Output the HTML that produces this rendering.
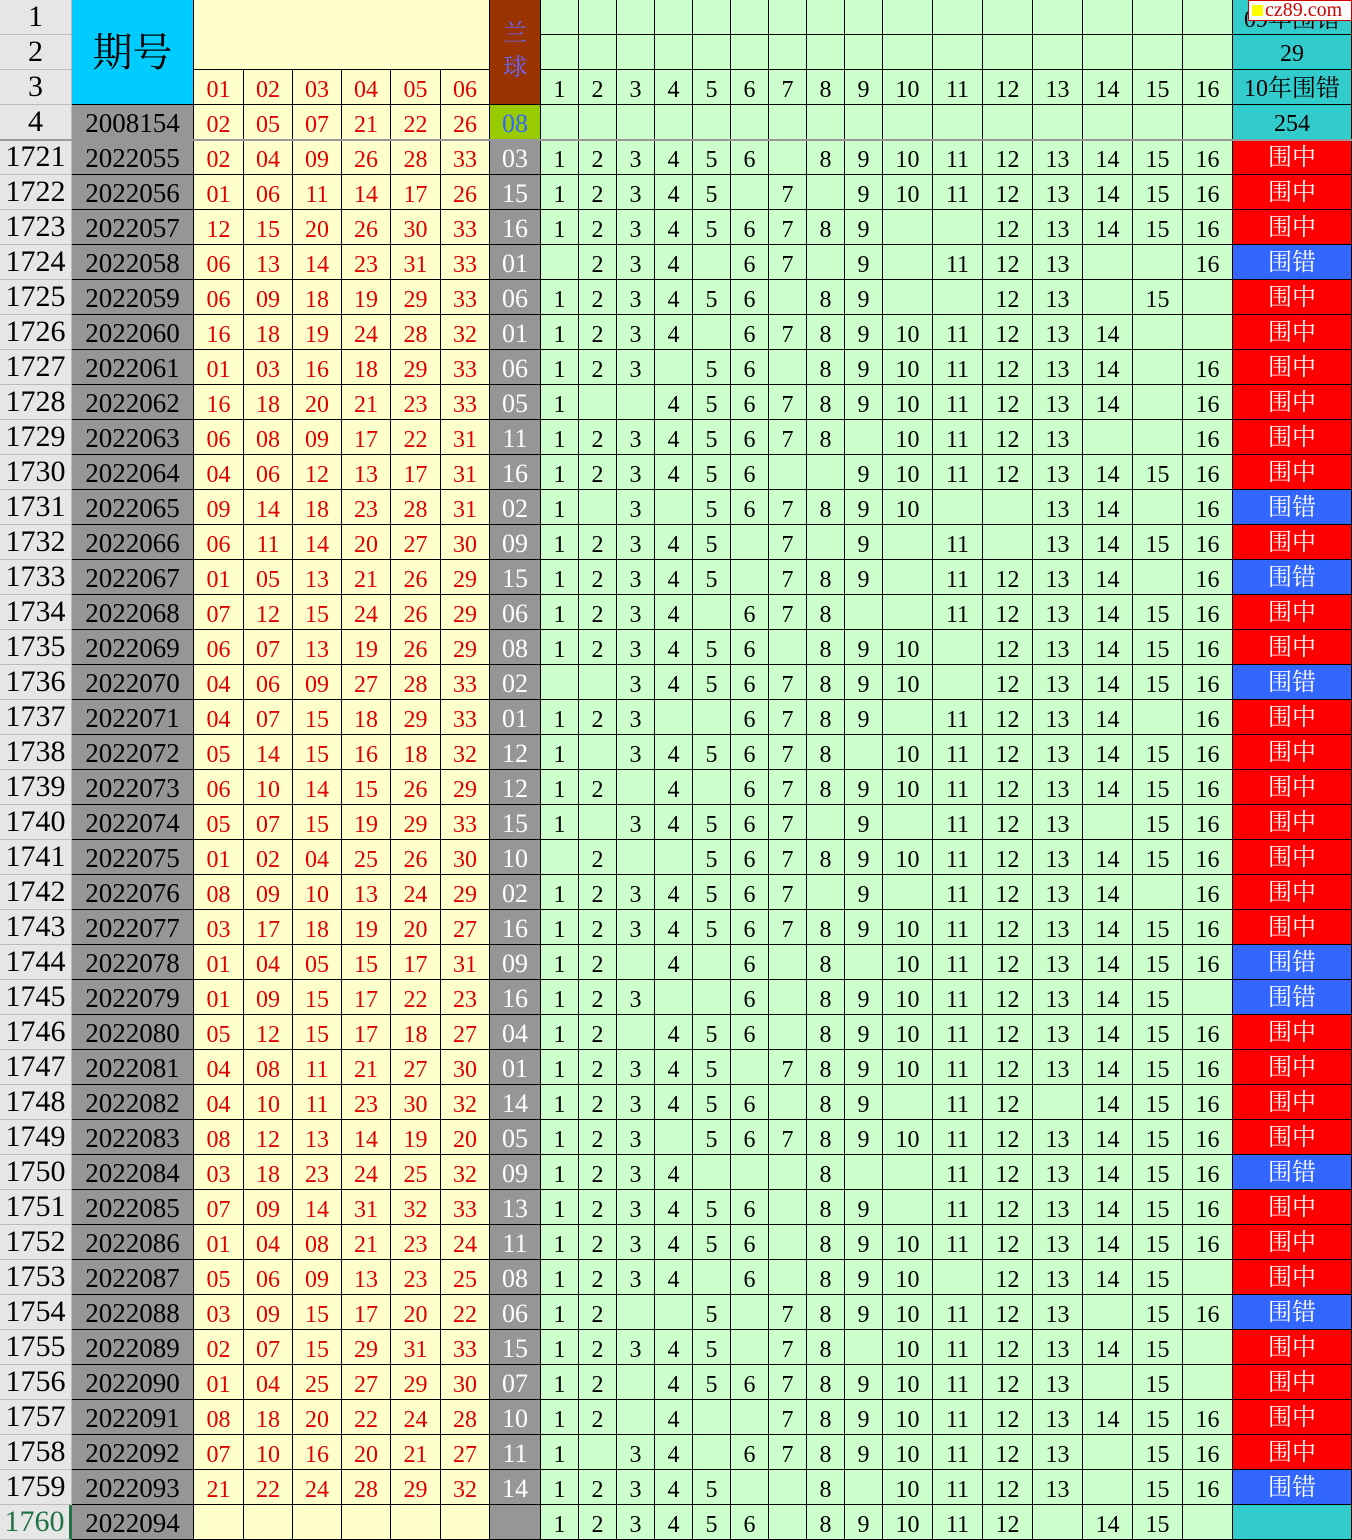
<!DOCTYPE html>
<html><head><meta charset="utf-8">
<style>
html,body{margin:0;padding:0;background:#fff;}
body{width:1352px;height:1536px;overflow:hidden;position:relative;font-family:"Liberation Serif","Noto Serif CJK SC","Noto Sans CJK SC",serif;}
.c{position:absolute;box-sizing:border-box;border-right:1px solid #000;border-bottom:1px solid #000;text-align:center;font-size:24px;line-height:40px;white-space:nowrap;overflow:hidden;}
</style></head><body>
<script>
var X=[0,72,194,244,293,342,391,441,490,541,579,617,655,693,731,769,807,845,883,933,983,1033,1083,1133,1183,1233,1352];
var H=35;
var out=[];
function cell(x0,x1,y0,y1,bg,txt,style){out.push('<div class="c" style="left:'+x0+'px;top:'+y0+'px;width:'+(x1-x0)+'px;height:'+(y1-y0)+'px;background:'+bg+';'+(style||'')+'">'+(txt||'')+'</div>');}
for(var r=0;r<4;r++){cell(0,72,r*H,(r+1)*H,'#e6e6e6',String(r+1),'font-size:30px;line-height:34px;border-right:1px solid #bbb;border-bottom:1px solid #bbb;');}
cell(72,194,0,105,'#00ccff','期号','font-size:40px;line-height:105px;');
cell(194,490,0,70,'#ffffcc','');
var hd=['01','02','03','04','05','06'];
for(var i=0;i<6;i++)cell(X[2+i],X[3+i],70,105,'#ffffcc',hd[i],'color:#e00000;line-height:40px;');
cell(490,541,0,105,'#993300','兰<br>球','color:#6666ff;font-size:24px;line-height:34px;padding-top:17px;');
for(var j=0;j<16;j++){cell(X[9+j],X[10+j],0,35,'#ccffcc','');cell(X[9+j],X[10+j],35,70,'#ccffcc','');cell(X[9+j],X[10+j],70,105,'#ccffcc',String(j+1));cell(X[9+j],X[10+j],105,140,'#ccffcc','');}
cell(1233,1352,0,35,'#33cccc','09年围错','line-height:40px;');
cell(1233,1352,35,70,'#33cccc','29','line-height:38px;');
cell(1233,1352,70,105,'#33cccc','10年围错','line-height:38px;');
cell(1233,1352,105,140,'#33cccc','254','line-height:38px;');
cell(72,194,105,140,'#969696','2008154','font-size:27px;line-height:37px;');
var r4=['02','05','07','21','22','26'];
for(var i=0;i<6;i++)cell(X[2+i],X[3+i],105,140,'#ffffcc',r4[i],'color:#e00000;');
cell(490,541,105,140,'#99cc00','08','color:#3366ff;font-size:26px;line-height:38px;');
var D=[
"02 04 09 26 28 33|03|1 2 3 4 5 6 8 9 10 11 12 13 14 15 16|1",
"01 06 11 14 17 26|15|1 2 3 4 5 7 9 10 11 12 13 14 15 16|1",
"12 15 20 26 30 33|16|1 2 3 4 5 6 7 8 9 12 13 14 15 16|1",
"06 13 14 23 31 33|01|2 3 4 6 7 9 11 12 13 16|0",
"06 09 18 19 29 33|06|1 2 3 4 5 6 8 9 12 13 15|1",
"16 18 19 24 28 32|01|1 2 3 4 6 7 8 9 10 11 12 13 14|1",
"01 03 16 18 29 33|06|1 2 3 5 6 8 9 10 11 12 13 14 16|1",
"16 18 20 21 23 33|05|1 4 5 6 7 8 9 10 11 12 13 14 16|1",
"06 08 09 17 22 31|11|1 2 3 4 5 6 7 8 10 11 12 13 16|1",
"04 06 12 13 17 31|16|1 2 3 4 5 6 9 10 11 12 13 14 15 16|1",
"09 14 18 23 28 31|02|1 3 5 6 7 8 9 10 13 14 16|0",
"06 11 14 20 27 30|09|1 2 3 4 5 7 9 11 13 14 15 16|1",
"01 05 13 21 26 29|15|1 2 3 4 5 7 8 9 11 12 13 14 16|0",
"07 12 15 24 26 29|06|1 2 3 4 6 7 8 11 12 13 14 15 16|1",
"06 07 13 19 26 29|08|1 2 3 4 5 6 8 9 10 12 13 14 15 16|1",
"04 06 09 27 28 33|02|3 4 5 6 7 8 9 10 12 13 14 15 16|0",
"04 07 15 18 29 33|01|1 2 3 6 7 8 9 11 12 13 14 16|1",
"05 14 15 16 18 32|12|1 3 4 5 6 7 8 10 11 12 13 14 15 16|1",
"06 10 14 15 26 29|12|1 2 4 6 7 8 9 10 11 12 13 14 15 16|1",
"05 07 15 19 29 33|15|1 3 4 5 6 7 9 11 12 13 15 16|1",
"01 02 04 25 26 30|10|2 5 6 7 8 9 10 11 12 13 14 15 16|1",
"08 09 10 13 24 29|02|1 2 3 4 5 6 7 9 11 12 13 14 16|1",
"03 17 18 19 20 27|16|1 2 3 4 5 6 7 8 9 10 11 12 13 14 15 16|1",
"01 04 05 15 17 31|09|1 2 4 6 8 10 11 12 13 14 15 16|0",
"01 09 15 17 22 23|16|1 2 3 6 8 9 10 11 12 13 14 15|0",
"05 12 15 17 18 27|04|1 2 4 5 6 8 9 10 11 12 13 14 15 16|1",
"04 08 11 21 27 30|01|1 2 3 4 5 7 8 9 10 11 12 13 14 15 16|1",
"04 10 11 23 30 32|14|1 2 3 4 5 6 8 9 11 12 14 15 16|1",
"08 12 13 14 19 20|05|1 2 3 5 6 7 8 9 10 11 12 13 14 15 16|1",
"03 18 23 24 25 32|09|1 2 3 4 8 11 12 13 14 15 16|0",
"07 09 14 31 32 33|13|1 2 3 4 5 6 8 9 11 12 13 14 15 16|1",
"01 04 08 21 23 24|11|1 2 3 4 5 6 8 9 10 11 12 13 14 15 16|1",
"05 06 09 13 23 25|08|1 2 3 4 6 8 9 10 12 13 14 15|1",
"03 09 15 17 20 22|06|1 2 5 7 8 9 10 11 12 13 15 16|0",
"02 07 15 29 31 33|15|1 2 3 4 5 7 8 10 11 12 13 14 15|1",
"01 04 25 27 29 30|07|1 2 4 5 6 7 8 9 10 11 12 13 15|1",
"08 18 20 22 24 28|10|1 2 4 7 8 9 10 11 12 13 14 15 16|1",
"07 10 16 20 21 27|11|1 3 4 6 7 8 9 10 11 12 13 15 16|1",
"21 22 24 28 29 32|14|1 2 3 4 5 8 10 11 12 13 15 16|0",
"||1 2 3 4 5 6 8 9 10 11 12 14 15|2"
];
for(var k=0;k<D.length;k++){
 var y0=140+k*H,y1=y0+H,p=D[k].split('|');
 var last=(k==D.length-1);
 cell(0,72,y0,y1,'#e6e6e6',String(1721+k),'font-size:30px;line-height:34px;border-right:'+(last?'3px solid #217346':'1px solid #bbb')+';border-bottom:1px solid #bbb;'+(last?'color:#217346;':''));
 cell(72,194,y0,y1,'#969696',String(2022055+k),'font-size:27px;line-height:37px;');
 var rr=p[0]?p[0].split(' '):['','','','','',''];
 for(var i=0;i<6;i++)cell(X[2+i],X[3+i],y0,y1,'#ffffcc',rr[i],'color:#e00000;');
 cell(490,541,y0,y1,'#969696',p[1],'color:#fff;font-size:26px;line-height:38px;');
 var pres={};p[2].split(' ').forEach(function(v){pres[v]=1;});
 for(var j=0;j<16;j++)cell(X[9+j],X[10+j],y0,y1,'#ccffcc',pres[String(j+1)]?String(j+1):'');
 if(p[3]=='1')cell(1233,1352,y0,y1,'#ff0000','围中','color:#fff;font-size:24px;line-height:36px;');
 else if(p[3]=='0')cell(1233,1352,y0,y1,'#3366ff','围错','color:#fff;font-size:24px;line-height:36px;');
 else cell(1233,1352,y0,y1,'#33cccc','');
}
out.push('<div style="position:absolute;left:0;top:139px;width:1352px;height:2px;background:#999;"></div>');
out.push('<div style="position:absolute;left:1248px;top:0;width:104px;height:21px;background:#fff;border:1px solid #c00;box-sizing:border-box;font-family:\'Liberation Serif\',serif;font-size:20px;line-height:19px;color:#c00;white-space:nowrap;overflow:hidden;"><span style="display:inline-block;width:11px;height:11px;background:#ff0;margin:0 2px 0 3px;"></span>cz89.com</div>');
document.write(out.join(''));
</script>
</body></html>
